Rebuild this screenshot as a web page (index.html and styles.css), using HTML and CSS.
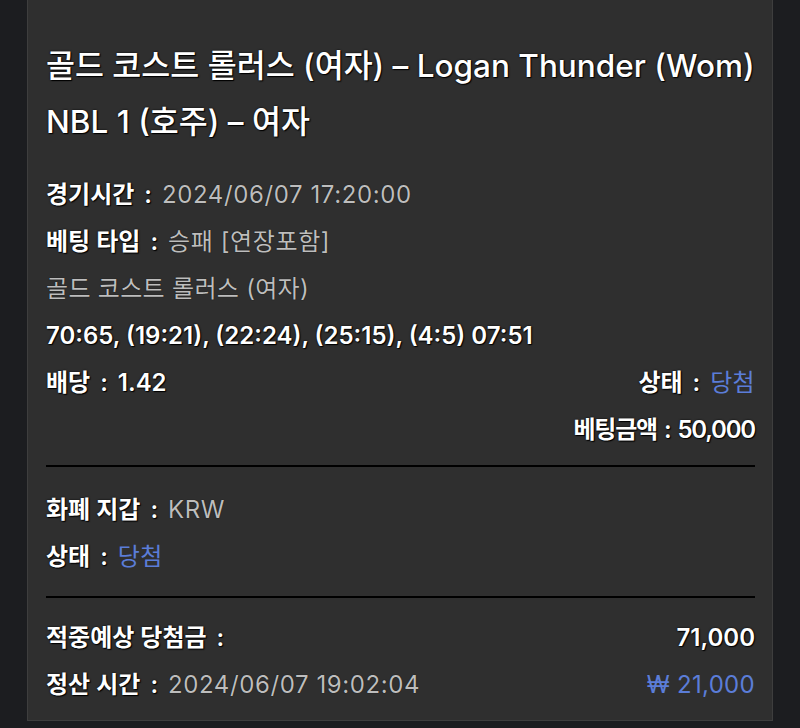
FILE: index.html
```html
<!DOCTYPE html>
<html lang="ko">
<head>
<meta charset="utf-8">
<link rel="stylesheet" href="styles.css">
</head>
<body>
<div class="card">
  <div class="title">
    <div class="title-line">골드 코스트 롤러스 (여자) – Logan Thunder (Wom)</div>
    <div class="title-line">NBL 1 (호주) – 여자</div>
  </div>
  <div class="section first">
    <div class="row"><span class="label">경기시간<span class="colon">:</span></span><span class="value">2024/06/07 17:20:00</span></div>
    <div class="row"><span class="label">베팅 타입<span class="colon">:</span></span><span class="value">승패 [연장포함]</span></div>
    <div class="row"><span class="value kr">골드 코스트 롤러스 (여자)</span></div>
    <div class="row"><span class="label">70:65, (19:21), (22:24), (25:15), (4:5) 07:51</span></div>
    <div class="row split"><span class="label">배당<span class="colon">:</span>1.42</span><span><span class="label">상태<span class="colon">:</span></span><span class="blue">당첨</span></span></div>
    <div class="row right"><span class="label tight">베팅금액<span class="colon small">:</span>50,000</span></div>
  </div>
  <div class="divider d1"></div>
  <div class="section">
    <div class="row"><span class="label">화폐 지갑<span class="colon">:</span></span><span class="value">KRW</span></div>
    <div class="row"><span class="label">상태<span class="colon">:</span></span><span class="blue">당첨</span></div>
  </div>
  <div class="divider d2"></div>
  <div class="section last">
    <div class="row split"><span class="label">적중예상 당첨금<span class="colon">:</span></span><span class="label">71,000</span></div>
    <div class="row split"><span><span class="label">정산 시간<span class="colon">:</span></span><span class="value">2024/06/07 19:02:04</span></span><span class="blue num">₩ 21,000</span></div>
  </div>
</div>
</body>
</html>
```
FILE: styles.css
```css
html, body {
  margin: 0;
  padding: 0;
  background: #1c1d20;
  height: 728px;
  overflow: hidden;
}
body {
  font-family: Inter, "Noto Sans CJK KR", sans-serif;
  color: #fff;
}
.card {
  margin-left: 27px;
  width: 746px;
  height: 721px;
  box-sizing: border-box;
  background: #2f2f2f;
  border: 1px solid #3e3e3e;
  border-top: none;
  padding: 38px 17px 0 18px;
}
.title-line {
  font-size: 31.5px;
  line-height: 56px;
  font-weight: 500;
  white-space: nowrap;
  text-shadow: 0 0 2px #000, 1px 1px 1px #000;
}
.section.first {
  margin-top: 21px;
}
.row {
  font-size: 24px;
  line-height: 47px;
  white-space: nowrap;
}
.row.split {
  display: flex;
  justify-content: space-between;
}
.row.right {
  text-align: right;
}
.label {
  color: #fff;
  font-weight: 600;
  text-shadow: 0 0 2px #000, 1px 1px 1px #000;
}
.label.tight {
  letter-spacing: -1.2px;
}
.colon {
  display: inline-block;
  margin: 0 10px 0 10px;
}
.colon.small {
  margin: 0 7px 0 7px;
}
.value {
  color: #bdbdbd;
  font-weight: 400;
  letter-spacing: 0.6px;
  text-shadow: 0 0 1px #000;
}
.value.kr {
  letter-spacing: 0.3px;
}
.blue {
  color: #5b7dd8;
  letter-spacing: 0.3px;
}
.divider {
  height: 2px;
  background: #000;
}
.divider.d1 {
  margin: 12px 0 19px;
}
.divider.d2 {
  margin: 16px 0 16px;
}
```
